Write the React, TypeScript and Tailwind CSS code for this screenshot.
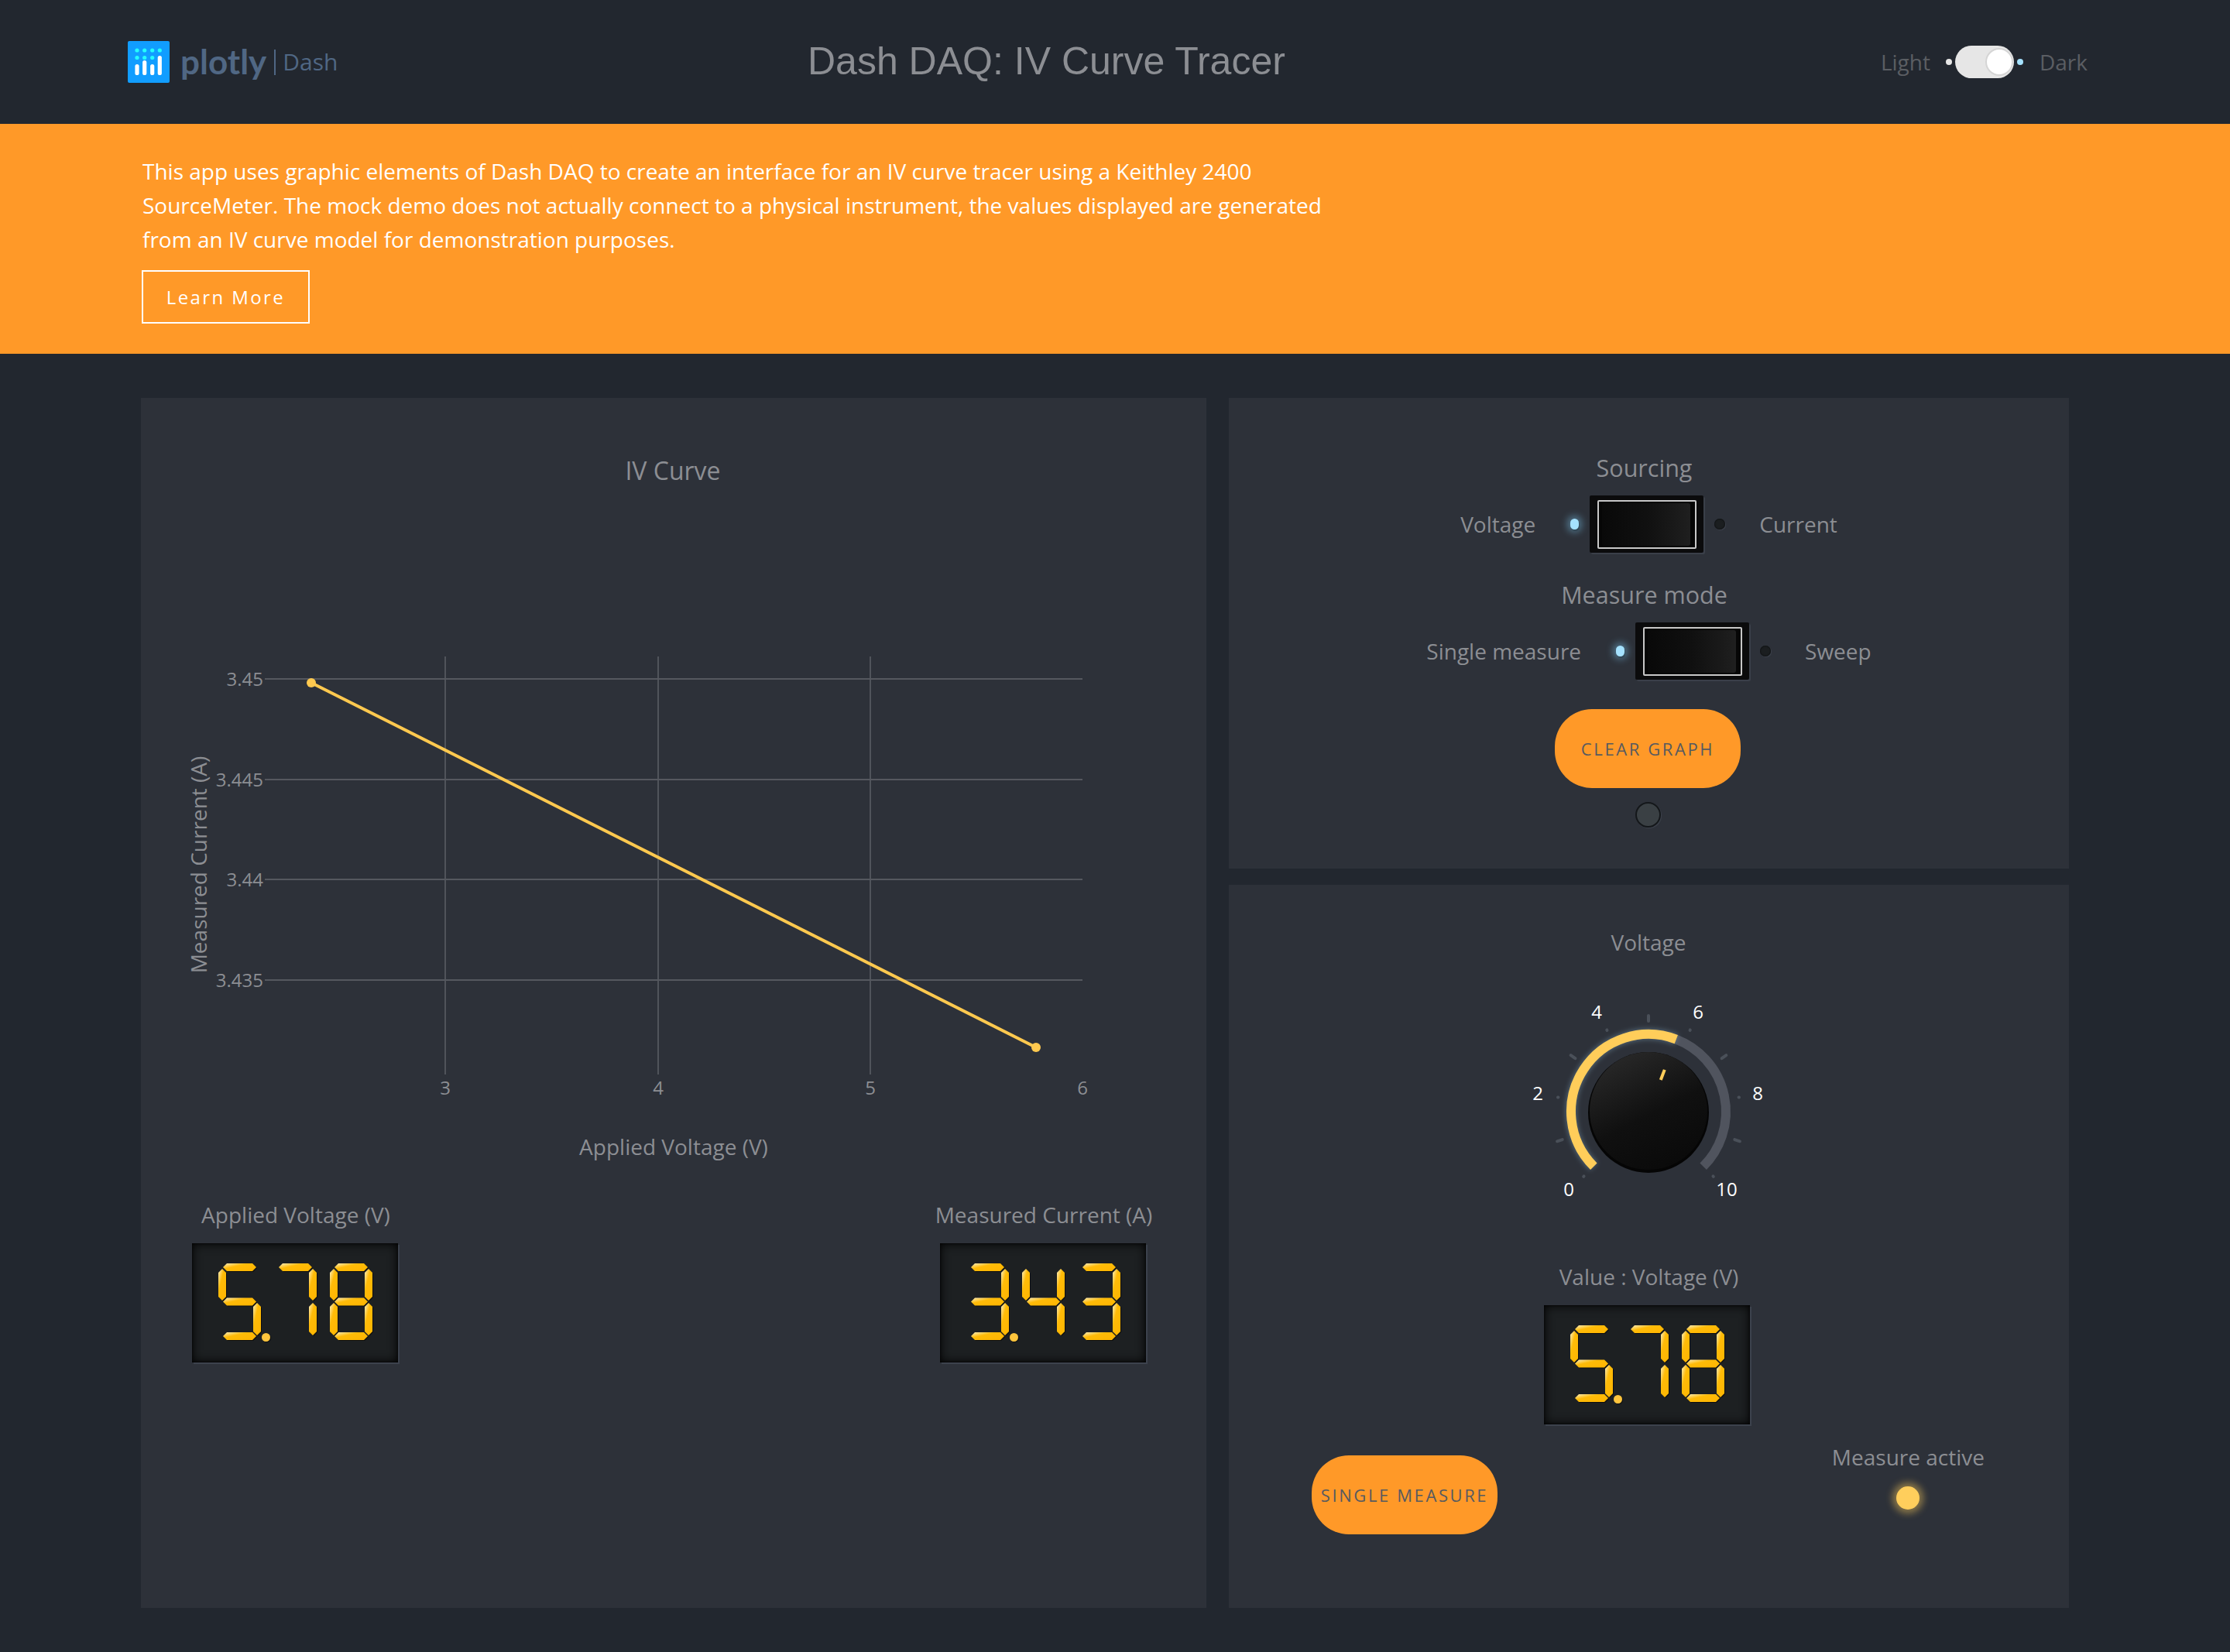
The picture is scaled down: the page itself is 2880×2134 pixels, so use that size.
const led = "shadow-[0_0_10px_4px_rgba(125,200,240,0.45),1px_2px_1px_rgba(0,0,0,0.5)]";

const SEGMENTS: Record<string, string> = {
  a: "6,5 11,0 44,0 49,5 44,10 11,10",
  b: "45,12 50,7 55,12 55,43 50,48 45,43",
  c: "45,56 50,51 55,56 55,88 50,93 45,88",
  d: "6,94 11,89 44,89 49,94 44,99 11,99",
  e: "0,56 5,51 10,56 10,88 5,93 0,88",
  f: "0,12 5,7 10,12 10,43 5,48 0,43",
  g: "6,49.5 11,44.5 44,44.5 49,49.5 44,54.5 11,54.5",
};

const DIGITS: Record<string, string> = {
  "3": "abcdg",
  "4": "bcfg",
  "5": "acdfg",
  "7": "abc",
  "8": "abcdefg",
};

function SevenSegment({ value }: { value: string }) {
  const chars = value.replace(".", "").split("");
  return (
    <div className="w-[266px] h-[154px] bg-[#1d2022] shadow-[inset_0_0_14px_#000,inset_0_0_3px_#000,2px_2px_0_#3c424d] pl-[34px] pt-[26px]">
      <svg width="210" height="108" viewBox="0 0 210 108" className="block">
        <defs>
          <linearGradient id="seg" x1="0" y1="0" x2="1" y2="1">
            <stop offset="0" stopColor="#fff0c4" />
            <stop offset="0.38" stopColor="#ffbb08" />
            <stop offset="1" stopColor="#ffb500" />
          </linearGradient>
        </defs>
        {chars.map((c, i) => (
          <g key={i} transform={`translate(${i * 72} 0)`}>
            {DIGITS[c].split("").map((s) => (
              <g key={s}>
                <polygon points={SEGMENTS[s]} fill="#000" opacity="0.55" transform="translate(1 1)" />
                <polygon points={SEGMENTS[s]} fill="url(#seg)" />
              </g>
            ))}
          </g>
        ))}
        <circle cx="62.5" cy="96.5" r="5.5" fill="#000" opacity="0.5" />
        <circle cx="61.5" cy="95.5" r="5.5" fill="#ffc53d" />
      </svg>
    </div>
  );
}

function Gauge({ label, value }: { label: string; value: string }) {
  return (
    <div className="w-[266px] flex flex-col items-center">
      <div className="ml-[2px] whitespace-nowrap h-[44px] leading-[44px] text-[28px] text-[#8c8e93]">{label}</div>
      <div className="mt-[15px]">
        <SevenSegment value={value} />
      </div>
    </div>
  );
}

function Rocker() {
  return (
    <div className="w-[147px] h-[74px] bg-[#0b0b0c] shadow-[2px_2px_0_#3a3f49] rounded-[2px] p-[6px_9px_5px_10px]">
      <div className="w-full h-full border-2 border-[#c8c8c8] rounded-[2px] p-[2px_6px_2px_4px] bg-[#060606]">
        <div className="w-full h-full rounded-[3px] bg-gradient-to-r from-[#090909] via-[#101010] to-[#1f1f1f]" />
      </div>
    </div>
  );
}

function SwitchRow({ left, right }: { left: string; right: string }) {
  return (
    <div className="flex items-center justify-center h-[74px] text-[28px] text-[#8c8e93]">
      <span className="mr-[45px]">{left}</span>
      <div className={`w-[11px] h-[14px] rounded-full bg-[#a5e2ff] ${led}`} />
      <div className="mx-[14px]">
        <Rocker />
      </div>
      <div className="w-[14px] h-[14px] rounded-full bg-[#1b1e20] shadow-[1px_1px_1px_#3d424c,inset_0_0_2px_#000]" />
      <span className="ml-[44px]">{right}</span>
    </div>
  );
}

function Chart() {
  const hLines = [
    { y: 877, t: "3.45" },
    { y: 1007, t: "3.445" },
    { y: 1136, t: "3.44" },
    { y: 1266, t: "3.435" },
  ];
  const vLines = [
    { x: 575, t: "3" },
    { x: 850, t: "4" },
    { x: 1124, t: "5" },
  ];
  return (
    <svg width="1376" height="1000" viewBox="182 514 1376 1000" className="block" fontFamily="'Open Sans', sans-serif">
      <text x="869" y="620" textAnchor="middle" fontSize="32" fill="#8c8e93">IV Curve</text>
      {vLines.map((l) => (
        <g key={l.x}>
          <line x1={l.x} x2={l.x} y1="848" y2="1388" stroke="#55585f" strokeWidth="1.8" />
          <text x={l.x} y="1414" textAnchor="middle" fontSize="24" fill="#8c8e93">{l.t}</text>
        </g>
      ))}
      <text x="1398" y="1414" textAnchor="middle" fontSize="24" fill="#8c8e93">6</text>
      {hLines.map((l) => (
        <g key={l.y}>
          <line x1="342" x2="1398" y1={l.y} y2={l.y} stroke="#55585f" strokeWidth="1.8" />
          <text x="340" y={l.y + 9} textAnchor="end" fontSize="24" fill="#8c8e93">{l.t}</text>
        </g>
      ))}
      <line x1="402" y1="882" x2="1338" y2="1353" stroke="#ffc94f" strokeWidth="4" />
      <circle cx="402" cy="882" r="6" fill="#ffc94f" />
      <circle cx="1338" cy="1353" r="6" fill="#ffc94f" />
      <text x="870" y="1492" textAnchor="middle" fontSize="28" fill="#8c8e93">Applied Voltage (V)</text>
      <text transform="translate(267 1117) rotate(-90)" textAnchor="middle" fontSize="28" fill="#8c8e93">Measured Current (A)</text>
    </svg>
  );
}

// point on a circle round the knob centre, angle 0 = straight up
function pt(r: number, deg: number) {
  const a = (deg * Math.PI) / 180;
  return { x: 170 + r * Math.sin(a), y: 156 - r * Math.cos(a) };
}

function arc(r: number, from: number, to: number) {
  const a = pt(r, from);
  const b = pt(r, to);
  return `M${a.x} ${a.y} A${r} ${r} 0 ${to - from > 180 ? 1 : 0} 1 ${b.x} ${b.y}`;
}

function Knob() {
  const ticks = Array.from({ length: 11 }, (_, i) => -135 + i * 27);
  const labels = [
    { t: "0", x: 67, y: 265 },
    { t: "2", x: 27, y: 141 },
    { t: "4", x: 103, y: 36 },
    { t: "6", x: 234, y: 36 },
    { t: "8", x: 311, y: 141 },
    { t: "10", x: 271, y: 265 },
  ];
  const i1 = pt(44, 21);
  const i2 = pt(58, 21);
  return (
    <svg width="340" height="290" viewBox="0 0 340 290" className="block" fontFamily="'Open Sans', sans-serif">
      <defs>
        <linearGradient id="knob" x1="0.2" y1="0" x2="0.7" y2="1">
          <stop offset="0" stopColor="#2a2a2a" />
          <stop offset="0.55" stopColor="#101010" />
          <stop offset="1" stopColor="#0a0a0a" />
        </linearGradient>
        <filter id="glow" x="-20%" y="-20%" width="140%" height="140%">
          <feGaussianBlur stdDeviation="3" />
        </filter>
      </defs>
      {ticks.map((d, i) => {
        const long = i % 2 === 1;
        const a = pt(long ? 117 : 118, d);
        const b = pt(long ? 124 : 118.5, d);
        return <line key={d} x1={a.x} y1={a.y} x2={b.x} y2={b.y} stroke="#4a5059" strokeWidth="4" strokeLinecap="round" />;
      })}
      <path d={arc(100, 21, 135)} fill="none" stroke="#50545e" strokeWidth="12" />
      <path d={arc(100, -135, 21)} fill="none" stroke="#8fb6d0" strokeOpacity="0.4" strokeWidth="14" filter="url(#glow)" />
      <path d={arc(100, -135, 21)} fill="none" stroke="#ffcd5a" strokeWidth="12" />
      <circle cx="170" cy="157" r="78" fill="#050505" />
      <circle cx="170" cy="155" r="76" fill="url(#knob)" />
      <line x1={i1.x} y1={i1.y} x2={i2.x} y2={i2.y} stroke="#ffcd5a" strokeWidth="4" />
      {labels.map((l) => (
        <text key={l.t} x={l.x} y={l.y} textAnchor="middle" fontSize="24" fill="#ffffff">{l.t}</text>
      ))}
    </svg>
  );
}

function PillButton({ label }: { label: string }) {
  return (
    <button className="w-[240px] h-[102px] rounded-[48px] bg-[#ff9928] text-[#565a60] text-[22px] tracking-[2.6px] uppercase whitespace-nowrap">
      {label}
    </button>
  );
}

function PlotlyLogo() {
  return (
    <div className="w-[878px] flex items-center">
      <svg width="54" height="54" viewBox="0 0 54 54" className="block">
        <rect width="54" height="54" rx="2" fill="#119dff" />
        {[12, 21.7, 31.7, 41.3].map((x) => (
          <circle key={x} cx={x} cy="12" r="2.6" fill="#25fdfc" />
        ))}
        {[12, 21.7, 31.7].map((x) => (
          <circle key={x} cx={x} cy="21.5" r="2.6" fill="#25fdfc" />
        ))}
        <rect x="9.4" y="30" width="5.2" height="14" rx="2.6" fill="#fff" />
        <rect x="19.1" y="25" width="5.2" height="19" rx="2.6" fill="#fff" />
        <rect x="29.1" y="30" width="5.2" height="14" rx="2.6" fill="#fff" />
        <rect x="38.7" y="19" width="5.2" height="25" rx="2.6" fill="#fff" />
      </svg>
      <span className="ml-[14px] text-[44px] leading-none font-bold text-[#506784] font-['Lato',sans-serif] -mt-[3px]">plotly</span>
      <span className="ml-[10px] w-[2px] h-[33px] bg-[#506784]" />
      <span className="ml-[9px] text-[30px] leading-none text-[#506784]">Dash</span>
    </div>
  );
}

export default function App() {
  return (
    <div className="w-[2880px] h-[2134px] bg-[#22272f] font-['Open_Sans',sans-serif] overflow-hidden">
      <header className="h-[160px] pl-[165px] pr-[184px] flex items-center">
        <PlotlyLogo />
        <h1 className="-mt-[2px] text-[50px] text-[#8c8e93] font-['Liberation_Sans',sans-serif] font-normal whitespace-nowrap">Dash DAQ: IV Curve Tracer</h1>
        <div className="ml-auto flex items-center text-[28px] text-[#5b5e63]">
          <span>Light</span>
          <span className="ml-[20px] w-[8px] h-[8px] rounded-full bg-[#e6e6e6]" />
          <div className="ml-[4px] w-[76px] h-[42px] rounded-full bg-[#e6e6e6] flex items-center justify-end pr-[1px]">
            <div className="w-[36px] h-[36px] rounded-full bg-white border-2 border-[#d5d5d5]" />
          </div>
          <span className="ml-[4px] w-[8px] h-[8px] rounded-full bg-[#a5e2ff]" />
          <span className="ml-[21px]">Dark</span>
        </div>
      </header>

      <section className="h-[297px] bg-[#ff9928] pl-[183px] pt-[39px] text-white">
        <p className="pl-[1px] whitespace-nowrap text-[28px] leading-[44px]">
          This app uses graphic elements of Dash DAQ to create an interface for an IV curve tracer using a Keithley 2400
          <br />
          SourceMeter. The mock demo does not actually connect to a physical instrument, the values displayed are generated
          <br />
          from an IV curve model for demonstration purposes.
        </p>
        <button className="mt-[18px] w-[217px] h-[69px] border-2 border-white text-[24px] tracking-[2.4px]">
          Learn More
        </button>
      </section>

      <main className="pl-[182px] pt-[57px] flex gap-[29px] items-start">
        <div className="w-[1376px] h-[1563px] bg-[#2d3139]">
          <Chart />
          <div className="flex justify-between pl-[66px] pr-[78px] mt-[33px]">
            <Gauge label="Applied Voltage (V)" value="5.78" />
            <Gauge label="Measured Current (A)" value="3.43" />
          </div>
        </div>

        <div className="w-[1085px] flex flex-col gap-[21px]">
          <div className="h-[608px] bg-[#2d3139] pt-[68px] flex flex-col items-center">
            <div className="h-[44px] leading-[44px] text-[30.5px] text-[#8c8e93] -ml-[12px]">Sourcing</div>
            <div className="mt-[14px]">
              <SwitchRow left="Voltage" right="Current" />
            </div>
            <div className="mt-[32px] h-[44px] leading-[44px] text-[30.5px] text-[#8c8e93] -ml-[12px]">Measure mode</div>
            <div className="mt-[14px]">
              <SwitchRow left="Single measure" right="Sweep" />
            </div>
            <div className="mt-[38px] -ml-[3px]">
              <PillButton label="Clear Graph" />
            </div>
            <div className="mt-[18px] -ml-[3px] w-[33px] h-[33px] rounded-full bg-[#3a4044] border-2 border-[#14171a] shadow-[1px_1px_1px_#3d424c]" />
          </div>

          <div className="h-[934px] bg-[#2d3139] pt-[52px] flex flex-col items-center">
            <div className="h-[44px] leading-[44px] text-[28px] text-[#8c8e93] -ml-[1px]">Voltage</div>
            <div className="mt-[41px] -ml-[2px]">
              <Knob />
            </div>
            <div className="mt-[57px] h-[44px] leading-[44px] text-[28px] text-[#8c8e93]">Value : Voltage (V)</div>
            <div className="mt-[15px] -ml-[5px]">
              <SevenSegment value="5.78" />
            </div>
            <div className="mt-[20px] w-full flex justify-between items-start pl-[107px] pr-[109px]">
              <div className="mt-[20px]">
                <PillButton label="Single Measure" />
              </div>
              <div className="flex flex-col items-center">
                <div className="h-[44px] leading-[44px] text-[28px] text-[#8c8e93]">Measure active</div>
                <div className="mt-[16px] w-[30px] h-[30px] rounded-full bg-[#ffce5c] shadow-[0_0_10px_5px_rgba(255,206,92,0.45)]" />
              </div>
            </div>
          </div>
        </div>
      </main>
    </div>
  );
}
